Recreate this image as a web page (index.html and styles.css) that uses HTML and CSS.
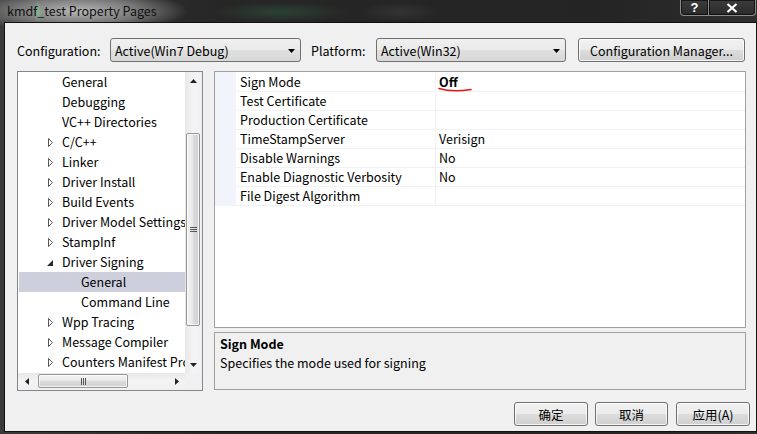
FILE: index.html
```html
<!DOCTYPE html>
<html>
<head>
<meta charset="utf-8">
<title>kmdf_test Property Pages</title>
<link rel="stylesheet" href="styles.css">
</head>
<body>
<div class="screen">
  <div class="titlebar">
    <span class="title">kmdf_test Property Pages</span>
    <div class="caption">
      <div class="cap help">?</div>
      <div class="cap close">
        <svg width="12" height="10" viewBox="0 0 12 10"><path d="M1.5 1 L10.5 9 M10.5 1 L1.5 9" stroke="#fff" stroke-width="2.2" fill="none"/></svg>
      </div>
    </div>
  </div>

  <div class="client">
    <div class="config-row">
      <span class="lbl">Configuration:</span>
      <div class="combo combo-config">
        <span>Active(Win7 Debug)</span>
        <svg class="dd" width="7" height="4" viewBox="0 0 7 4"><path d="M0 0 H7 L3.5 4 Z" fill="#000"/></svg>
      </div>
      <span class="lbl plat">Platform:</span>
      <div class="combo combo-plat">
        <span>Active(Win32)</span>
        <svg class="dd" width="7" height="4" viewBox="0 0 7 4"><path d="M0 0 H7 L3.5 4 Z" fill="#000"/></svg>
      </div>
      <div class="btn cfgmgr">Configuration Manager...</div>
    </div>

    <div class="main">
      <div class="tree">
        <div class="tree-top">
          <div class="tree-list">
            <div class="trow"><span class="tw"></span><span>General</span></div>
            <div class="trow"><span class="tw"></span><span>Debugging</span></div>
            <div class="trow"><span class="tw"></span><span>VC++ Directories</span></div>
            <div class="trow"><span class="tw"><svg width="6" height="9" viewBox="0 0 6 9"><path d="M0.5 0.5 L4.5 4.5 L0.5 8.5 Z" fill="#fff" stroke="#555"/></svg></span><span>C/C++</span></div>
            <div class="trow"><span class="tw"><svg width="6" height="9" viewBox="0 0 6 9"><path d="M0.5 0.5 L4.5 4.5 L0.5 8.5 Z" fill="#fff" stroke="#555"/></svg></span><span>Linker</span></div>
            <div class="trow"><span class="tw"><svg width="6" height="9" viewBox="0 0 6 9"><path d="M0.5 0.5 L4.5 4.5 L0.5 8.5 Z" fill="#fff" stroke="#555"/></svg></span><span>Driver Install</span></div>
            <div class="trow"><span class="tw"><svg width="6" height="9" viewBox="0 0 6 9"><path d="M0.5 0.5 L4.5 4.5 L0.5 8.5 Z" fill="#fff" stroke="#555"/></svg></span><span>Build Events</span></div>
            <div class="trow"><span class="tw"><svg width="6" height="9" viewBox="0 0 6 9"><path d="M0.5 0.5 L4.5 4.5 L0.5 8.5 Z" fill="#fff" stroke="#555"/></svg></span><span>Driver Model Settings</span></div>
            <div class="trow"><span class="tw"><svg width="6" height="9" viewBox="0 0 6 9"><path d="M0.5 0.5 L4.5 4.5 L0.5 8.5 Z" fill="#fff" stroke="#555"/></svg></span><span>StampInf</span></div>
            <div class="trow"><span class="tw"><svg class="exp" width="6" height="6" viewBox="0 0 6 6"><path d="M6 0 V6 H0 Z" fill="#262626"/></svg></span><span>Driver Signing</span></div>
            <div class="trow sub sel"><span>General</span></div>
            <div class="trow sub"><span>Command Line</span></div>
            <div class="trow"><span class="tw"><svg width="6" height="9" viewBox="0 0 6 9"><path d="M0.5 0.5 L4.5 4.5 L0.5 8.5 Z" fill="#fff" stroke="#555"/></svg></span><span>Wpp Tracing</span></div>
            <div class="trow"><span class="tw"><svg width="6" height="9" viewBox="0 0 6 9"><path d="M0.5 0.5 L4.5 4.5 L0.5 8.5 Z" fill="#fff" stroke="#555"/></svg></span><span>Message Compiler</span></div>
            <div class="trow"><span class="tw"><svg width="6" height="9" viewBox="0 0 6 9"><path d="M0.5 0.5 L4.5 4.5 L0.5 8.5 Z" fill="#fff" stroke="#555"/></svg></span><span>Counters Manifest Provider</span></div>
          </div>
          <div class="vscroll">
            <div class="sbtn"><svg width="7" height="4" viewBox="0 0 7 4"><path d="M3.5 0 L7 4 H0 Z" fill="#222"/></svg></div>
            <div class="vtrack">
              <div class="vthumb">
                <svg width="7" height="5" viewBox="0 0 7 5"><path d="M0 0.5 H7 M0 2.5 H7 M0 4.5 H7" stroke="#555" stroke-width="1"/></svg>
              </div>
            </div>
            <div class="sbtn"><svg width="7" height="4" viewBox="0 0 7 4"><path d="M0 0 H7 L3.5 4 Z" fill="#222"/></svg></div>
          </div>
        </div>
        <div class="tree-bottom">
          <div class="hscroll">
            <div class="sbtn"><svg width="4" height="7" viewBox="0 0 4 7"><path d="M0 3.5 L4 0 V7 Z" fill="#222"/></svg></div>
            <div class="htrack">
              <div class="hthumb">
                <svg width="5" height="7" viewBox="0 0 5 7"><path d="M0.5 0 V7 M2.5 0 V7 M4.5 0 V7" stroke="#555" stroke-width="1"/></svg>
              </div>
            </div>
            <div class="sbtn"><svg width="4" height="7" viewBox="0 0 4 7"><path d="M4 3.5 L0 0 V7 Z" fill="#222"/></svg></div>
          </div>
          <div class="corner"></div>
        </div>
      </div>

      <div class="right">
        <div class="grid">
          <div class="grid-body">
            <div class="gutter"></div>
            <div class="rows">
              <div class="prow"><div class="pname">Sign Mode</div><div class="pval bold">Off<svg class="mark" width="40" height="8" viewBox="0 0 40 8"><path d="M1 2.5 Q14 6.5 33 3.5" stroke="#e3141b" stroke-width="1.6" fill="none" stroke-linecap="round"/></svg></div></div>
              <div class="prow"><div class="pname">Test Certificate</div><div class="pval"></div></div>
              <div class="prow"><div class="pname">Production Certificate</div><div class="pval"></div></div>
              <div class="prow"><div class="pname">TimeStampServer</div><div class="pval">Verisign</div></div>
              <div class="prow"><div class="pname">Disable Warnings</div><div class="pval">No</div></div>
              <div class="prow"><div class="pname">Enable Diagnostic Verbosity</div><div class="pval">No</div></div>
              <div class="prow"><div class="pname">File Digest Algorithm</div><div class="pval"></div></div>
            </div>
          </div>
        </div>
        <div class="desc">
          <div class="desc-title">Sign Mode</div>
          <div class="desc-text">Specifies the mode used for signing</div>
        </div>
      </div>
    </div>

    <div class="buttons">
      <div class="btn dlg">确定</div>
      <div class="btn dlg mid">取消</div>
      <div class="btn dlg">应用(A)</div>
    </div>
  </div>
</div>
</body>
</html>
```

FILE: styles.css
```css
* { box-sizing: border-box; }
html, body { margin: 0; padding: 0; }
body {
  width: 757px;
  height: 434px;
  overflow: hidden;
  background: #1d1d1d;
  font-family: "Noto Sans CJK SC", "Liberation Sans", sans-serif;
  font-size: 12.5px;
  color: #000;
}
.screen {
  width: 757px;
  height: 434px;
  display: flex;
  flex-direction: column;
  background:
    radial-gradient(ellipse 4px 12px at 38px 12px, rgba(120, 220, 140, 0.55), rgba(120, 220, 140, 0) 100%),
    radial-gradient(ellipse 110px 22px at 78px 11px, rgba(190, 190, 190, 0.95), rgba(150, 150, 150, 0.7) 55%, rgba(60, 60, 60, 0) 100%),
    radial-gradient(ellipse 70px 10px at 280px 12px, rgba(50, 100, 70, 0.45), rgba(50, 100, 70, 0) 100%),
    radial-gradient(ellipse 40px 10px at 400px 12px, rgba(60, 60, 60, 0.6), rgba(60, 60, 60, 0) 100%),
    linear-gradient(to right, #3a3a3a 0, #262626 220px, #242424 600px, #2e2e2e 100%);
}

/* title bar */
.titlebar {
  height: 22px;
  flex: none;
  display: flex;
  justify-content: space-between;
  align-items: flex-start;
}
.title {
  margin-left: 7px;
  line-height: 21px;
  font-size: 12.5px;
  color: #111;
}
.caption {
  display: flex;
  margin-right: 1px;
}
.cap {
  height: 16px;
  border: 1px solid #8c8c8c;
  border-top: none;
  background: linear-gradient(#3c3c3c, #2a2a2a);
  box-shadow: inset 0 0 0 1px rgba(0,0,0,0.6);
  color: #fff;
  font-weight: bold;
  font-family: "Liberation Sans", sans-serif;
  font-size: 13px;
  line-height: 15px;
  display: flex;
  justify-content: center;
  align-items: center;
}
.help { width: 29px; border-radius: 0 0 0 4px; }
.close { width: 47px; border-left: none; border-radius: 0 0 4px 0; }

/* client area */
.client {
  margin-left: 4px;
  width: 753px;
  height: 410px;
  flex: none;
  border: 1px solid #111;
  background: #f0f0f0;
  display: flex;
  flex-direction: column;
}

.config-row {
  margin-top: 15px;
  height: 24px;
  display: flex;
  align-items: center;
  padding-left: 12px;
}
.lbl { width: 93px; flex: none; }
.plat { margin-left: 10px; width: 65px; }
.combo {
  height: 24px;
  flex: none;
  border: 1px solid #707070;
  border-radius: 3px;
  background: linear-gradient(#f0f0f0, #eaeaea 50%, #e0e0e0 50%, #d8d8d8);
  display: flex;
  align-items: center;
  justify-content: space-between;
  padding: 0 5px 0 4px;
}
.combo-config { width: 191px; }
.combo-plat { width: 190px; }
.dd { margin-top: 1px; }
.btn {
  height: 24px;
  flex: none;
  border: 1px solid #707070;
  border-radius: 3px;
  background: linear-gradient(#f2f2f2, #ebebeb 50%, #dddddd 50%, #cfcfcf);
  box-shadow: inset 0 0 0 1px rgba(255,255,255,0.75);
  display: flex;
  align-items: center;
  justify-content: center;
}
.cfgmgr { margin-left: 12px; width: 167px; }

/* main */
.main {
  margin-top: 9px;
  height: 320px;
  display: flex;
  padding-left: 12px;
  gap: 11px;
}

.tree {
  width: 186px;
  height: 320px;
  flex: none;
  border: 1px solid #828790;
  background: #fff;
  display: flex;
  flex-direction: column;
}
.tree-top {
  height: 301px;
  display: flex;
}
.tree-list {
  width: 167px;
  flex: none;
  overflow: hidden;
  padding-left: 1px;
  white-space: nowrap;
}
.trow {
  height: 20px;
  display: flex;
  align-items: center;
  line-height: 20px;
}
.tw {
  width: 16px;
  flex: none;
  margin-left: 27px;
  height: 20px;
  display: flex;
  align-items: center;
  padding-left: 2px;
}
.tw .exp { margin-left: -1px; margin-top: 1px; }
.trow.sub { padding-left: 62px; }
.trow.sel { background: #cdcfdc; }

.vscroll {
  width: 17px;
  flex: none;
  display: flex;
  flex-direction: column;
  background: linear-gradient(to right, #e8e8e8, #f4f4f4 50%, #f0f0f0);
}
.sbtn {
  width: 17px;
  height: 17px;
  display: flex;
  align-items: center;
  justify-content: center;
  flex: none;
}
.vtrack { flex: 1; }
.vthumb {
  margin: 44px 2px 0 1px;
  height: 193px;
  border: 1px solid #979797;
  border-radius: 2px;
  background: linear-gradient(to right, #f3f3f3, #e9e9e9 45%, #dadada 55%, #d2d2d2);
  box-shadow: inset 0 0 0 1px rgba(255,255,255,0.7);
  display: flex;
  align-items: center;
  justify-content: center;
}
.tree-bottom {
  height: 17px;
  display: flex;
}
.hscroll {
  width: 167px;
  flex: none;
  display: flex;
  background: linear-gradient(#e8e8e8, #f4f4f4 50%, #f0f0f0);
}
.htrack { flex: 1; }
.hthumb {
  margin: 1px 0 2px 3px;
  width: 90px;
  height: 14px;
  border: 1px solid #979797;
  border-radius: 2px;
  background: linear-gradient(#f3f3f3, #e9e9e9 45%, #dadada 55%, #d2d2d2);
  box-shadow: inset 0 0 0 1px rgba(255,255,255,0.7);
  display: flex;
  align-items: center;
  justify-content: center;
}
.corner { width: 17px; background: #f0f0f0; }

/* right side */
.right {
  width: 532px;
  flex: none;
  display: flex;
  flex-direction: column;
}
.grid {
  height: 257px;
  border: 1px solid #a0a0a0;
  background: #fff;
}
.grid-body { display: flex; }
.gutter { width: 21px; flex: none; background: #f1f5fb; }
.rows { flex: 1; padding-top: 1px; }
.prow {
  height: 19px;
  border-bottom: 1px solid #eff1f4;
  display: flex;
  line-height: 18px;
}
.pname {
  width: 200px;
  flex: none;
  padding-left: 4px;
  border-right: 1px solid #eff1f4;
}
.pval {
  flex: 1;
  padding-left: 3px;
  position: relative;
}
.bold { font-weight: bold; }
.mark {
  position: absolute;
  left: 2px;
  top: 13px;
}

.desc {
  margin-top: 4px;
  height: 58px;
  border: 1px solid #a0a0a0;
  background: #f0f0f0;
  padding: 1px 5px;
  line-height: 19px;
}
.desc-title { font-weight: bold; }

/* dialog buttons */
.buttons {
  margin-top: 11px;
  display: flex;
  justify-content: flex-end;
  gap: 7px;
  padding-right: 6px;
}
.dlg { width: 74px; }
.dlg.mid { width: 73px; margin-right: 1px; }
```
